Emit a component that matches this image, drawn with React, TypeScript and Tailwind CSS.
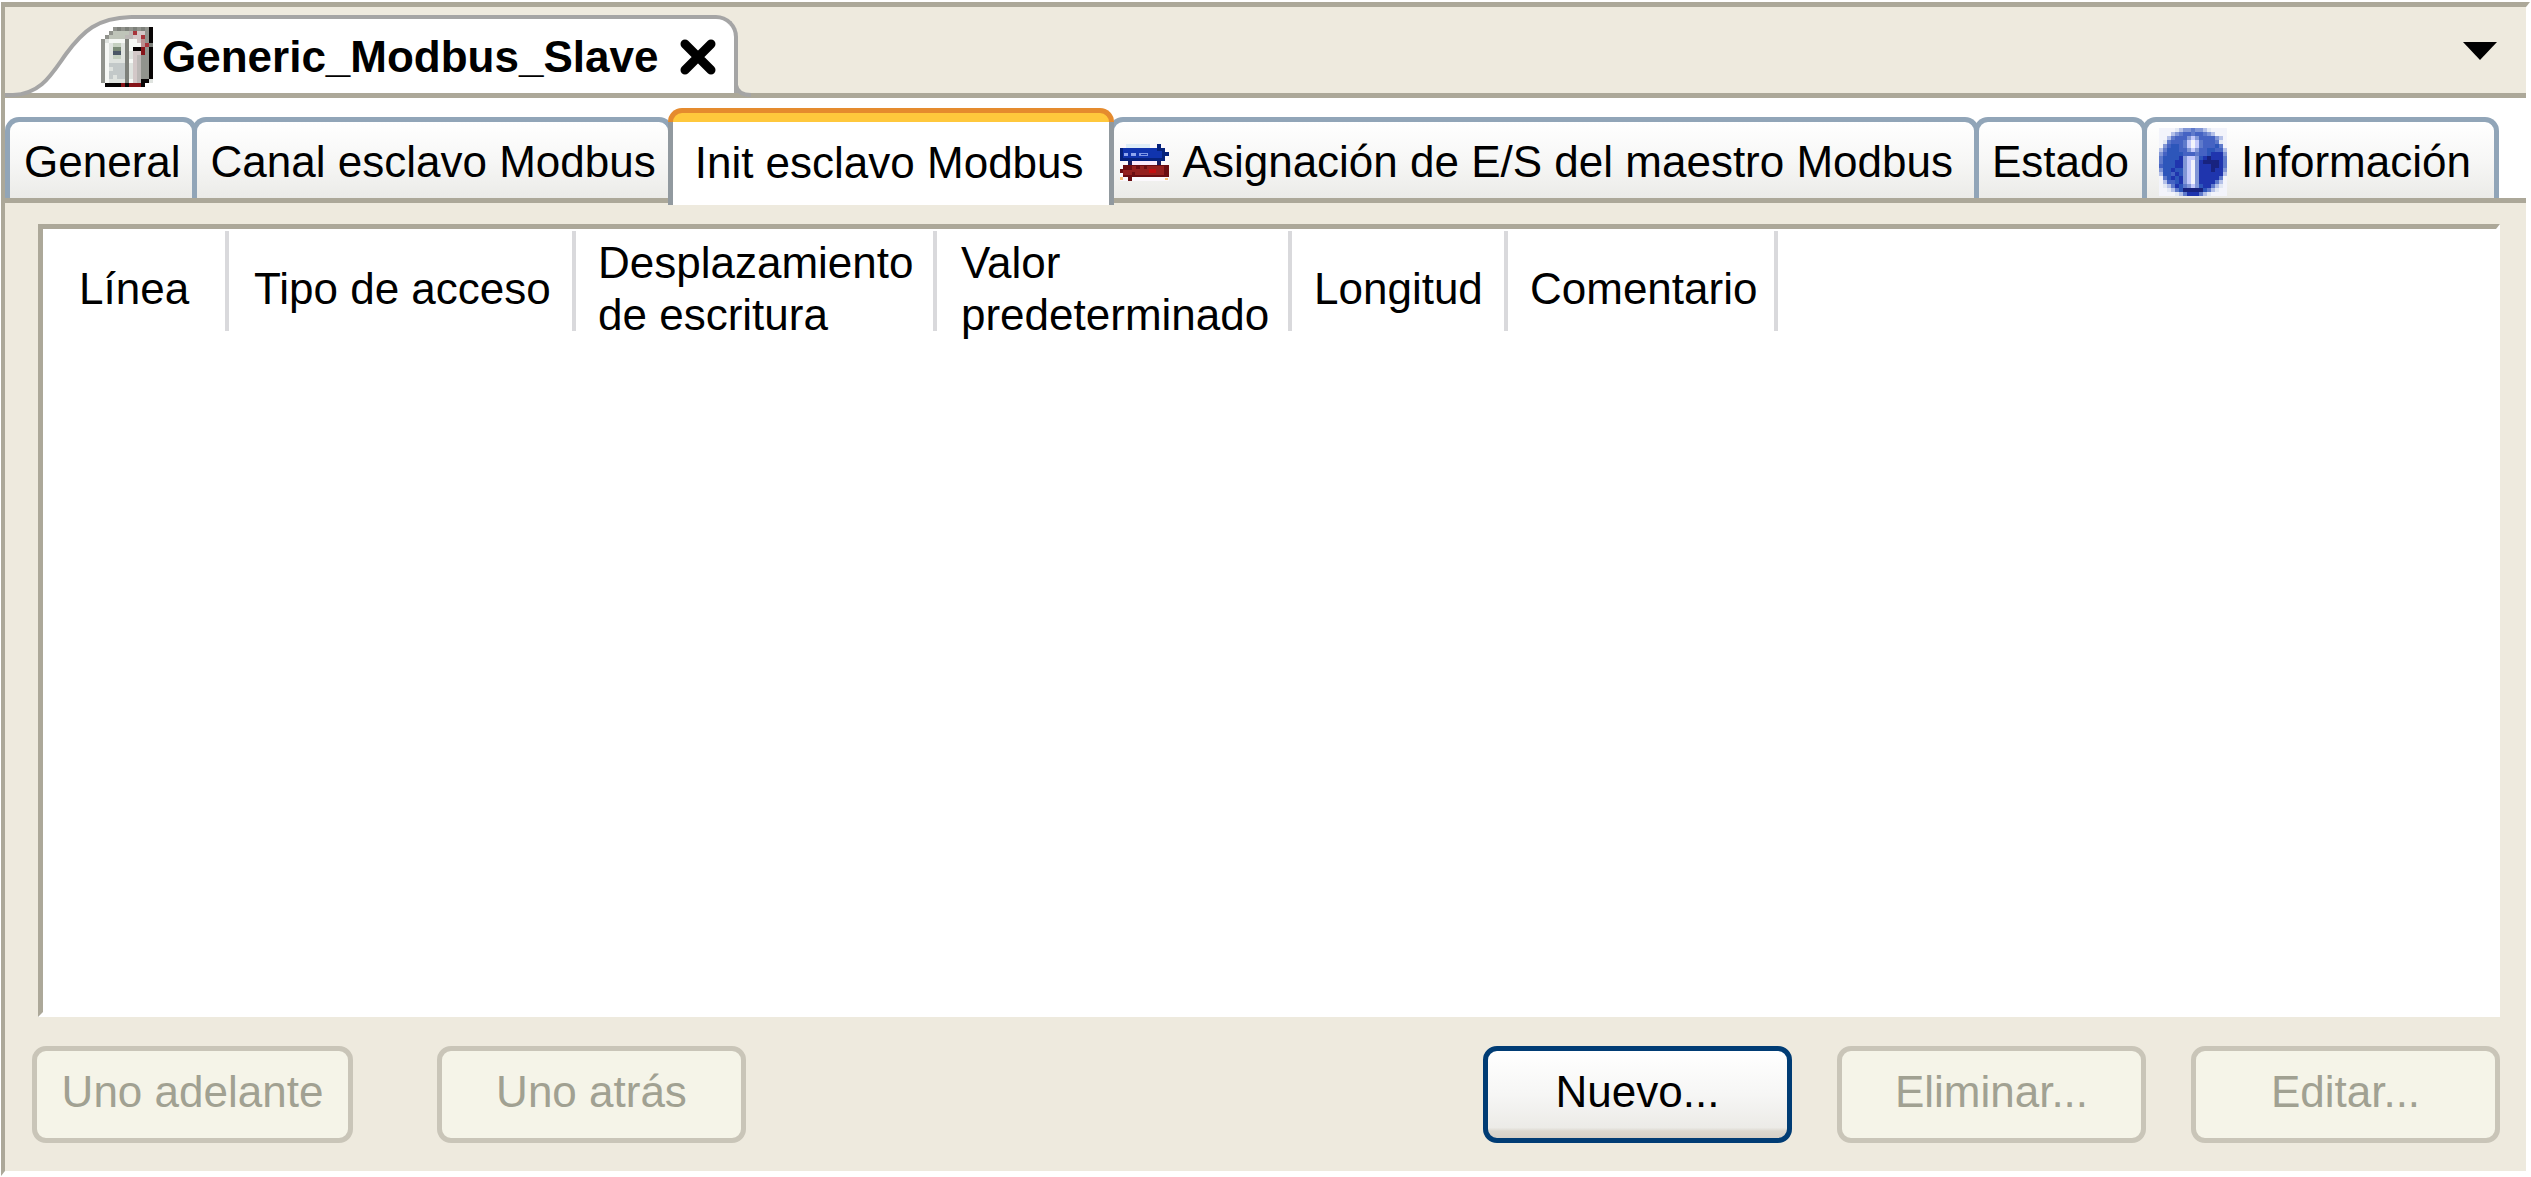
import type { ReactNode } from "react";

interface PixelIconProps {
  readonly rows: string[];
  readonly palette: Record<string, string>;
  readonly className: string;
}

const CABINET_ROWS = [
  "...gGgGgGgGgk",
  "..gllllmrppgk",
  ".gllllmmpprgk",
  "gvwwwwGwwpogk",
  "gwveevGwwworG",
  "gwvddvGwkkRgk",
  "gwvbbvGvppRgk",
  "gwveevGvpmggk",
  "gwvvvvGwpmggk",
  "gwccccGvpmggk",
  "gwvcccGvpmggk",
  "gwccccGvpmggk",
  "gwcvccGvpmggk",
  "gwvvvvGwpmkkv",
  ".kkkkRkRRRk..",
];

const CABINET_PALETTE = {
  g: "#91938d",
  G: "#7d807a",
  l: "#bfc4b9",
  m: "#bcb8b6",
  p: "#d3c8c8",
  w: "#f6f8f5",
  v: "#dfe3df",
  e: "#c5d0c0",
  c: "#c3c9c9",
  d: "#7a8a76",
  b: "#4b5766",
  o: "#b98f8f",
  r: "#a8343b",
  R: "#861419",
  k: "#080505",
};

const INFO_ROWS = [
  "wwwwvlaabaalvwwww",
  "wwwlabccbccbalwww",
  "wwlbcccaiaccccalw",
  "wvbcccbiwibcccbvw",
  "wacddcbiwibcccdbw",
  "lbdddccaiaccddccl",
  "acddddcccbccdeeea",
  "bddddeaiiadefeeeb",
  "bdddeeaiwaeffffeb",
  "cdddeeaiwaeeeffeb",
  "addeddaiwaeeefeea",
  "lddcedaiwaeeeeeel",
  "wbdedeaiwaeeeeebw",
  "wlccdeaiwaeeeeblw",
  "wvlbedbaiadeeblvw",
  "wwvlbdfffffdblvww",
  "wwwwvlbeeeblvwwww",
];

const INFO_PALETTE = {
  w: "#f3f4fb",
  v: "#e2e8f4",
  l: "#b4c0e8",
  a: "#8196d6",
  b: "#5f7acb",
  c: "#4563c3",
  d: "#2d56ba",
  e: "#1f35ae",
  f: "#18237f",
  i: "#c3c9fb",
};

function PixelIcon({ rows, palette, className }: PixelIconProps) {
  return (
    <svg
      className={className}
      viewBox={`0 0 ${rows[0].length} ${rows.length}`}
      preserveAspectRatio="none"
      shapeRendering="crispEdges"
      aria-hidden="true"
    >
      {rows.map((row, y) =>
        row.split("").map((key, x) =>
          palette[key] ? <rect key={`${x}-${y}`} x={x} y={y} width="1" height="1" fill={palette[key]} /> : null,
        ),
      )}
    </svg>
  );
}

function MappingIcon() {
  return (
    <svg className="h-[37px] w-[49px] shrink-0" viewBox="0 0 49 37" shapeRendering="crispEdges" aria-hidden="true">
      <rect width="49" height="37" fill="#fbf8fc" />
      <rect x="6" width="24" height="4" fill="#dfeef8" />
      <rect x="12" y="17" width="24" height="4" fill="#fbe9fb" />
      <path d="M0 4H37V0H41V4H45V8H49V12H45V17H0Z" fill="#06227c" />
      <path d="M3 4H37V7H42V14H3Z" fill="#1034ae" />
      <path d="M4 9H8V12H4ZM11 9H16V12H11Z" fill="#8fa6ee" />
      <path d="M19 9H28V12H19Z" fill="#7f98e6" />
      <path d="M21 10H27V11H21Z" fill="#1034ae" />
      <path d="M8 17H12V21H8ZM37 17H41V21H37Z" fill="#1b1b5e" />
      <path d="M3 21H49V33H12V37H8V33H3V29H0V25H3Z" fill="#6b0d12" />
      <path d="M12 22H44V31H3V26H12Z" fill="#94201f" />
      <path d="M16 22H20V25H16ZM24 22H27V25H24ZM12 28H15V31H12Z" fill="#6b0d12" />
      <rect x="29" y="25" width="7" height="4" fill="#c30d10" />
      <path d="M0 33H3V36H0ZM45 34H48V36H45Z" fill="#f7c07c" />
    </svg>
  );
}

function EditorTab() {
  return (
    <div className="flex h-[78px] items-start">
      <svg className="h-[82px] w-[126px] shrink-0" viewBox="0 0 126 82" aria-hidden="true">
        <path d="M8 78C36 78 46 60 61 39C78 16 92 3 126 2V78Z" fill="#fff" />
        <path d="M0 80H8C36 79 46 60 61 39C78 16 92 3 126 2" fill="none" stroke="#a5a5a5" strokeWidth="4" />
      </svg>
      <div className="flex h-[78px] items-center rounded-tr-[22px] border-t-4 border-r-4 border-[#a5a5a5] bg-white pt-[2px] pr-[18px]">
        <PixelIcon rows={CABINET_ROWS} palette={CABINET_PALETTE} className="relative -ml-[30px] h-[60px] w-[52px] shrink-0" />
        <h1 className="ml-[9px] text-[44px] leading-[52px] font-bold">Generic_Modbus_Slave</h1>
        <button type="button" aria-label="Cerrar" className="ml-[22px]">
          <svg className="size-[36px]" viewBox="0 0 36 36" aria-hidden="true">
            <path d="M5 5L31 31M31 5L5 31" stroke="#000" strokeWidth="9" strokeLinecap="round" />
          </svg>
        </button>
      </div>
      <svg className="-ml-1 h-[14px] w-[18px] shrink-0 self-end overflow-visible" viewBox="0 0 18 14" aria-hidden="true">
        <path d="M2 0V6C3 13 8 16 17 16" fill="none" stroke="#a5a5a5" strokeWidth="4" />
      </svg>
    </div>
  );
}

interface PageTabProps {
  readonly className: string;
  readonly children: ReactNode;
}

function PageTab({ className, children }: PageTabProps) {
  return (
    <button
      type="button"
      role="tab"
      aria-selected="false"
      className={`-ml-[5px] flex h-[81px] items-center rounded-t-[14px] border-x-[5px] border-t-[5px] border-[#91a5b8] bg-linear-to-b from-white via-[#f7f7f6] to-[#ebebe8] pt-1 whitespace-nowrap ${className}`}
    >
      {children}
    </button>
  );
}

function ActivePageTab({ children }: { readonly children: ReactNode }) {
  return (
    <button type="button" role="tab" aria-selected="true" className="relative z-10 -mb-[7px] -ml-[5px] flex h-[97px] flex-col">
      <span className="h-[14px] w-full shrink-0 rounded-t-[14px] border-x-[5px] border-t-[5px] border-[#e58b2e] bg-[#ffc83c]" />
      <span className="flex flex-1 items-start border-x-[5px] border-[#91999f] bg-white pt-[15px] pr-[25px] pl-[22px] whitespace-nowrap">
        {children}
      </span>
    </button>
  );
}

const COLUMNS = [
  { label: "Línea", className: "w-[186px] pl-9" },
  { label: "Tipo de acceso", className: "w-[347px] pl-[25px]" },
  { label: "Desplazamiento de escritura", className: "w-[361px] pl-[22px]" },
  { label: "Valor predeterminado", className: "w-[355px] pl-6" },
  { label: "Longitud", className: "w-[216px] pl-[22px]" },
  { label: "Comentario", className: "w-[270px] pl-[22px]" },
];

function ActionButton({ label, className, disabled }: { readonly label: string; readonly className: string; readonly disabled?: boolean }) {
  return (
    <button
      type="button"
      disabled={disabled}
      className={`h-[97px] rounded-[14px] border-[5px] pb-[5px] text-center ${className} ${
        disabled
          ? "border-[#c9c5b8] bg-[#f5f4e8] text-[#a1a192]"
          : "border-[#003c74] bg-[linear-gradient(to_bottom,#fff,#f6f6f5_50%,#ecebe7_88%,#dcd8cf_92%,#d6d0c7)] text-black"
      }`}
    >
      {label}
    </button>
  );
}

export default function App() {
  return (
    <div className="flex min-h-screen flex-col bg-white pt-[2px] pr-px pb-px pl-px font-['Liberation_Sans',Arial,sans-serif] text-[44px] leading-[52px] text-black">
      <main className="flex flex-1 flex-col border-t-[5px] border-r-4 border-b-[5px] border-l-4 border-t-[#aca899] border-r-white border-b-white border-l-[#aca899] bg-[#eeeade]">
        <header className="flex h-[91px] items-end justify-between border-b-[5px] border-[#aca899]">
          <EditorTab />
          <button type="button" aria-label="Lista de editores" className="mr-[29px] mb-[33px]">
            <svg className="h-[18px] w-[34px]" viewBox="0 0 34 18" aria-hidden="true">
              <path d="M0 0H34L17 18Z" fill="#000" />
            </svg>
          </button>
        </header>

        <div role="tablist" className="flex h-[105px] items-end border-b-[5px] border-[#aca899] bg-white pl-[5px]">
          <PageTab className="pr-[11px] pl-[14px]">General</PageTab>
          <PageTab className="pr-3 pl-[14px]">Canal esclavo Modbus</PageTab>
          <ActivePageTab>Init esclavo Modbus</ActivePageTab>
          <PageTab className="gap-[14px] pr-[21px] pl-[6px]">
            <MappingIcon />
            Asignación de E/S del maestro Modbus
          </PageTab>
          <PageTab className="px-[13px]">Estado</PageTab>
          <PageTab className="gap-[14px] pr-[23px] pl-3">
            <PixelIcon rows={INFO_ROWS} palette={INFO_PALETTE} className="size-[68px] shrink-0" />
            Información
          </PageTab>
        </div>

        <section className="mt-[21px] mr-[26px] ml-[33px] flex-1 border-t-[5px] border-r-4 border-b-[5px] border-l-[5px] border-t-[#aca899] border-r-white border-b-white border-l-[#aca899] bg-white pt-[2px]">
          <table className="border-collapse text-left">
            <thead>
              <tr>
                {COLUMNS.map((column) => (
                  <th key={column.label} scope="col" className="p-0 font-normal">
                    <div className={`flex h-[100px] items-center border-r-4 border-[#d9d9dc] pt-[15px] ${column.className}`}>
                      {column.label}
                    </div>
                  </th>
                ))}
              </tr>
            </thead>
            <tbody />
          </table>
        </section>

        <footer className="mt-[29px] mr-[26px] mb-[28px] ml-[27px] flex justify-between">
          <div className="flex gap-[84px]">
            <ActionButton label="Uno adelante" className="w-[321px]" disabled />
            <ActionButton label="Uno atrás" className="w-[309px]" disabled />
          </div>
          <div className="flex gap-[45px]">
            <ActionButton label="Nuevo..." className="w-[309px]" />
            <ActionButton label="Eliminar..." className="w-[309px]" disabled />
            <ActionButton label="Editar..." className="w-[309px]" disabled />
          </div>
        </footer>
      </main>
    </div>
  );
}
